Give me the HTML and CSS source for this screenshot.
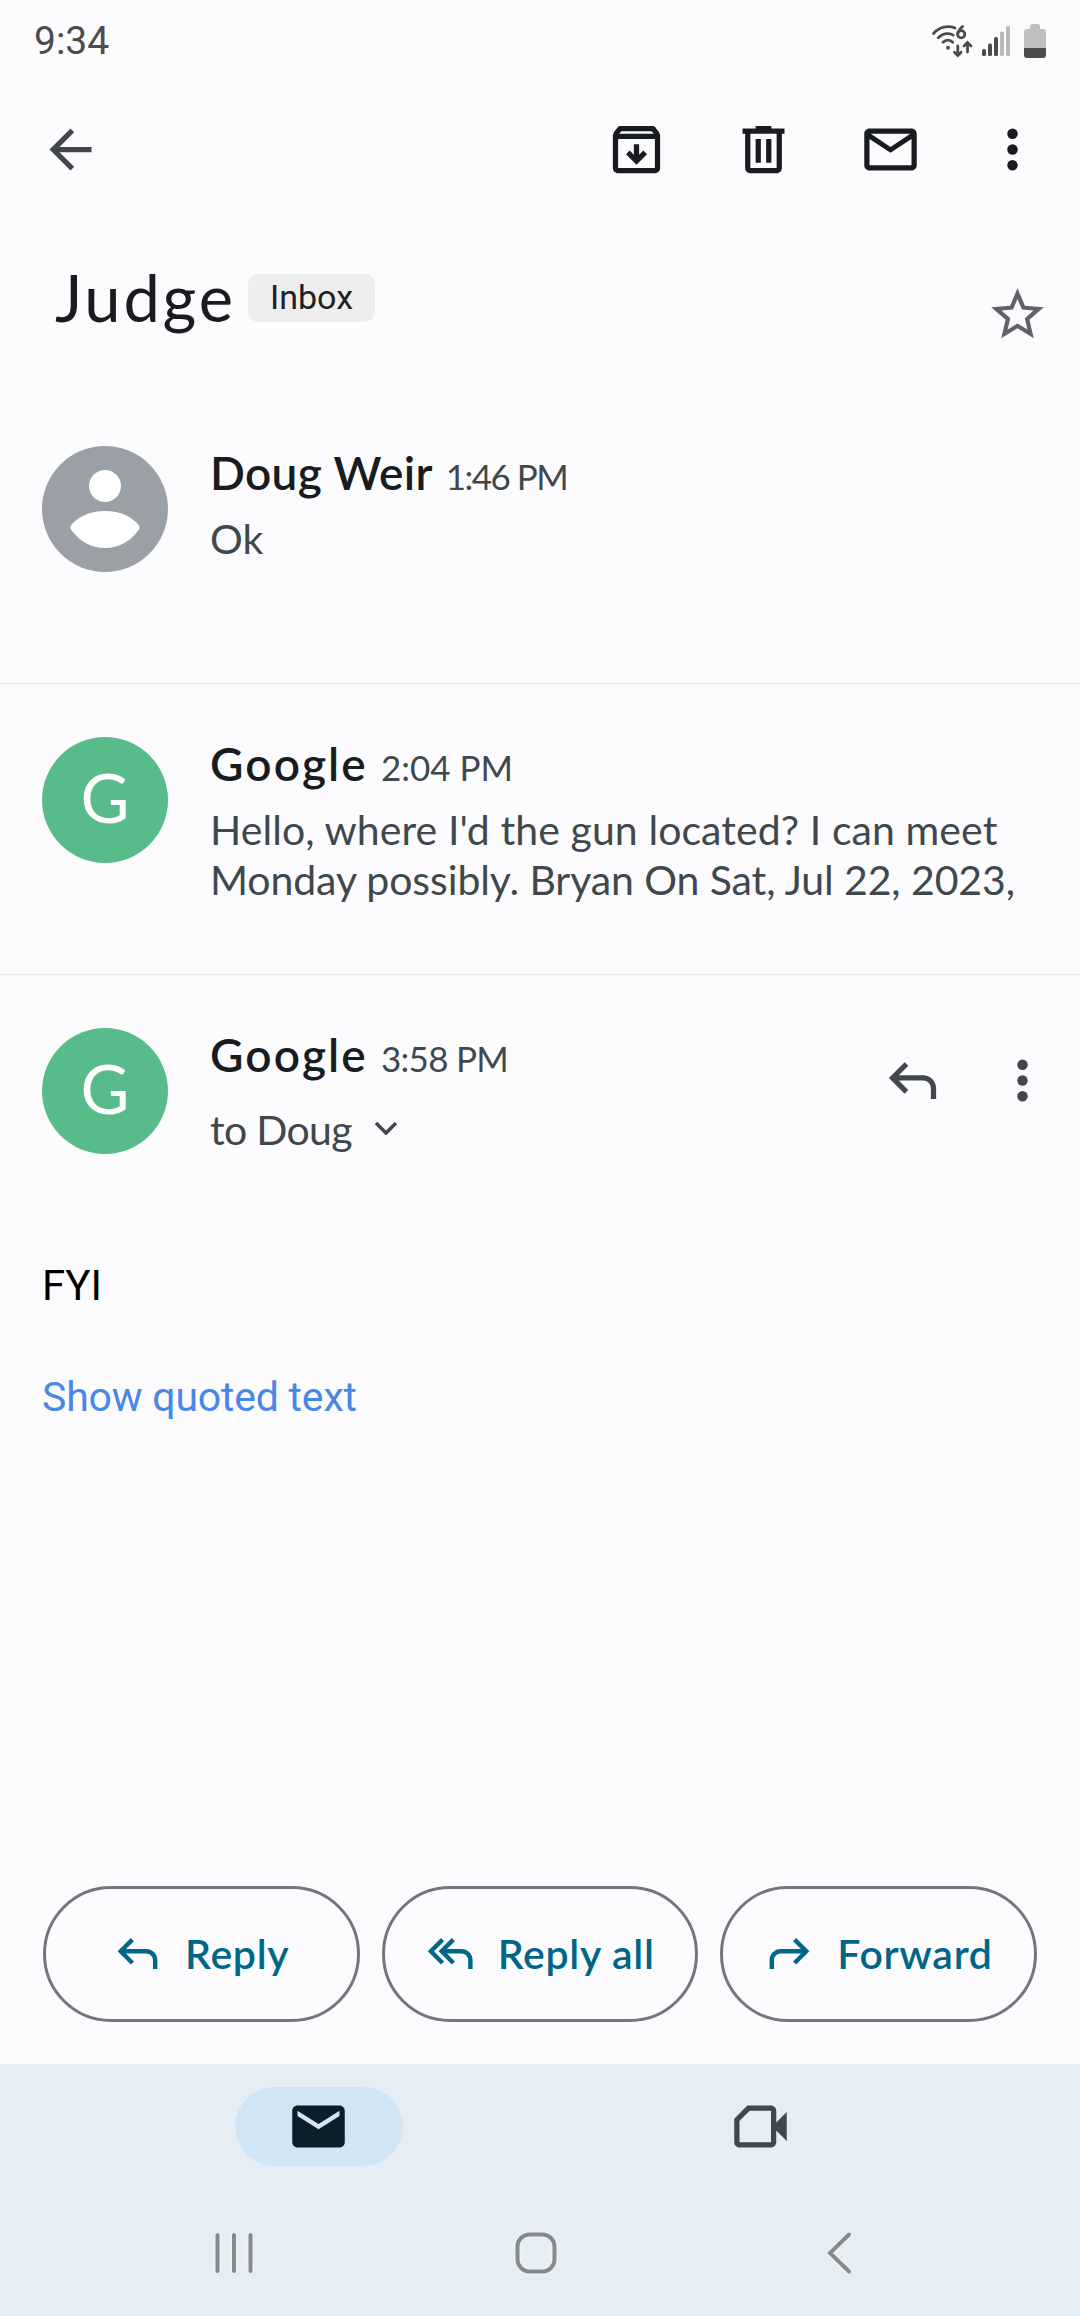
FILE: index.html
```html
<!DOCTYPE html>
<html lang="en">
<head>
    <meta charset="UTF-8">
    <meta name="viewport" content="width=device-width, initial-scale=1.0">
    <title>Judge</title>
    <link rel="stylesheet" href="styles.css">
</head>
<body>
    <svg class="sprite">
        <symbol id="more" viewBox="0 0 24 24"><circle cx="12" cy="6" r="2"/><circle cx="12" cy="12" r="2"/><circle cx="12" cy="18" r="2"/></symbol>
        <symbol id="reply" viewBox="0 0 24 24"><path d="M9 5l1.4 1.4L6.8 10H16c2.76 0 5 2.24 5 5v4h-2v-4c0-1.65-1.35-3-3-3H6.800l3.600 3.600L9 17l-6-6z"/></symbol>
    </svg>
    <div class="screen">
        <div class="status-bar">
            <span class="clock">9:34</span>
            <svg class="wifi" viewBox="0 0 42 34">
                <g fill="none" stroke="#4c4c4c" stroke-width="2.8" stroke-linecap="round">
                    <path d="M2.5 9.5C8.5 2.8 17 1.2 24 4"/>
                    <path d="M7.2 13.8c4.5-4.6 10.800-5.400 15-2.600"/>
                    <path d="M12 18.3c2.800-2.800 7-2.800 9.800 0"/>
                    <path d="M31.500 2.500c-2.500 2.400-4.800 4.800-4.800 7.700"/>
                    <circle cx="30.200" cy="10.200" r="3.600"/>
                    <path d="M26.800 22v9M23.500 28.200l3.300 3.300 3.300-3.300M36.500 28v-9M33 22l3.500-3.500L40 22"/>
                </g>
                <circle cx="17" cy="23.700" r="2" fill="#4c4c4c"/>
            </svg>
            <svg class="signal" viewBox="0 0 28 30">
                <g fill="#4c4c4c">
                    <rect x="0" y="23" width="4" height="7" rx="1.5"/>
                    <rect x="6" y="17.500" width="4" height="12.500" rx="1.5"/>
                    <rect x="12" y="11" width="4" height="19" rx="1.5"/>
                </g>
                <g fill="#b9b9ba">
                    <rect x="18" y="5.500" width="4" height="24.500" rx="1.5"/>
                    <rect x="24" y="0" width="4" height="30" rx="1.5"/>
                </g>
            </svg>
            <svg class="battery" viewBox="0 0 22 34">
                <path fill="#bfbfc0" d="M6 2.500Q6 0 8.500 0h5Q16 0 16 2.500V5h3q3 0 3 3v16H0V8q0-3 3-3h3z"/>
                <path fill="#4c4c4c" d="M0 24h22v7q0 3-3 3H3q-3 0-3-3z"/>
            </svg>
        </div>

        <div class="toolbar">
            <svg class="icon back" viewBox="0 0 24 24"><path d="M20 11H7.800l5.600-5.600L12 4l-8 8 8 8 1.400-1.400L7.800 13H20z"/></svg>
            <svg class="icon" viewBox="0 0 24 24"><path fill-rule="evenodd" d="M5.600 3h12.800l.6.3L20.600 5.400 21 6.500V19c0 1.100-.9 2-2 2H5c-1.100 0-2-.9-2-2V6.500l.4-1.100L5 3.300zM5.400 6h13.200l-.9-1H6.300zM5 8v11h14V8zm6 2h2v4l1.600-1.600L16 13.800l-4 4-4-4 1.400-1.400L11 14z"/></svg>
            <svg class="icon" viewBox="0 0 24 24"><path fill-rule="evenodd" d="M9 3h6v1h5v2h-1v13c0 1.100-.9 2-2 2H7c-1.100 0-2-.9-2-2V6H4V4h5zM7 6v13h10V6zm2 2h2v9H9zm4 0h2v9h-2z"/></svg>
            <svg class="icon" viewBox="0 0 24 24"><path fill-rule="evenodd" d="M4 4h16c1.100 0 2 .9 2 2v12c0 1.100-.9 2-2 2H4c-1.100 0-2-.9-2-2V6c0-1.100.9-2 2-2zm.5 2L12 11l7.500-5zM4 8v10h16V8l-8 5.200z"/></svg>
            <svg class="icon more"><use href="#more"/></svg>
        </div>

        <div class="subject">
            <h1>Judge</h1>
            <span class="label">Inbox</span>
            <svg class="icon star" viewBox="0 0 24 24"><path d="M22 9.240l-7.190-.62L12 2 9.190 8.630 2 9.240l5.460 4.730L5.820 21 12 17.270 18.180 21l-1.630-7.030L22 9.240zM12 15.400l-3.760 2.270 1-4.280-3.320-2.880 4.380-.38L12 6.100l1.710 4.040 4.380.38-3.320 2.880 1 4.280L12 15.400z"/></svg>
        </div>

        <div class="message">
            <svg class="avatar" viewBox="0 0 126 126">
                <circle cx="63" cy="63" r="63" fill="#9aa0a6"/>
                <circle cx="63" cy="40" r="16" fill="#fff"/>
                <path fill="#fff" d="M63 65c15 0 28 6 34 14.500q1 2 0 4C89 95 77 102 63 102S37 95 29 83.500q-1-2 0-4C35 71 48 65 63 65z"/>
            </svg>
            <div class="details">
                <div class="sender"><span class="name">Doug Weir</span><span class="time early">1:46 PM</span></div>
                <p class="snippet">Ok</p>
            </div>
        </div>

        <div class="message">
            <div class="avatar letter">G</div>
            <div class="details">
                <div class="sender"><span class="name google">Google</span><span class="time">2:04 PM</span></div>
                <p class="snippet"><span class="loose">Hello, where I'd the gun located? I can meet</span><br><span class="tight">Monday possibly. Bryan On Sat, Jul 22, 2023,</span></p>
            </div>
        </div>

        <div class="message open">
            <div class="avatar letter">G</div>
            <div class="details">
                <div class="sender"><span class="name google">Google</span><span class="time late">3:58 PM</span></div>
                <p class="recipient">to Doug <svg class="chevron" viewBox="0 0 24 14"><path d="M2 2l10 10L22 2" fill="none" stroke="#40484c" stroke-width="3.5"/></svg></p>
            </div>
            <svg class="icon"><use href="#reply"/></svg>
            <svg class="icon more"><use href="#more"/></svg>
        </div>

        <div class="body">
            <p>FYI</p>
            <a class="quoted">Show quoted text</a>
        </div>

        <div class="actions">
            <button class="action reply"><svg><use href="#reply"/></svg><span>Reply</span></button>
            <button class="action reply-all"><svg viewBox="0 0 24 24"><path d="M7.700 5l1.400 1.400L4.500 11l4.600 4.600L7.700 17l-6-6zM12.600 5L14 6.400 10.400 10H17c2.760 0 5 2.240 5 5v4h-2v-4c0-1.650-1.350-3-3-3h-6.600l3.600 3.600-1.400 1.400-6-6z"/></svg><span>Reply all</span></button>
            <button class="action forward"><svg class="flip"><use href="#reply"/></svg><span>Forward</span></button>
        </div>

        <div class="tabs">
            <div class="tab selected">
                <svg viewBox="0 0 24 24"><path d="M20 4H4c-1.100 0-2 .9-2 2v12c0 1.100.9 2 2 2h16c1.100 0 2-.9 2-2V6c0-1.100-.9-2-2-2zm0 4l-8 5-8-5V6l8 5 8-5v2z"/></svg>
            </div>
            <div class="tab">
                <svg viewBox="0 0 24 24"><path fill-rule="evenodd" d="M7 4h9c1.100 0 2 .9 2 2v4.500l4-4v11l-4-4V18c0 1.100-.9 2-2 2H4c-1.100 0-2-.9-2-2V9zM7.900 6L4 9.900V18h12V6z"/></svg>
            </div>
        </div>

        <div class="system-nav">
            <svg viewBox="0 0 44 44"><path d="M5.500 4v36M22 4v36M38.500 4v36"/></svg>
            <svg viewBox="0 0 44 44"><rect x="2.500" y="3.500" width="37" height="37" rx="12"/></svg>
            <svg viewBox="0 0 44 44"><path d="M32 3.500L13 22l19 18.500"/></svg>
        </div>
    </div>
</body>
</html>
```
FILE: styles.css
```css
* {
  box-sizing: border-box;
}
body {
  margin: 0;
  font-family: "Roboto", sans-serif;
  background-color: #fcfcff;
  color: #191c1e;
}
h1,
p {
  margin: 0;
  font-weight: 400;
}
svg {
  display: block;
  flex-shrink: 0;
}
.sprite {
  display: none;
}
.screen {
  width: 1080px;
  height: 2316px;
  display: flex;
  flex-direction: column;
  overflow: hidden;
}
.icon {
  width: 63px;
  height: 63px;
  fill: #191c1e;
}

/* status bar */
.status-bar {
  height: 82px;
  padding: 0 34px;
  display: flex;
  align-items: center;
}
.clock {
  font-size: 39px;
  color: #4c4c4c;
  margin-right: auto;
}
.wifi {
  width: 42px;
  height: 34px;
}
.signal {
  width: 28px;
  height: 30px;
  margin-left: 9px;
}
.battery {
  width: 22px;
  height: 34px;
  margin-left: 14px;
}

/* toolbar */
.toolbar {
  height: 136px;
  padding: 0 36px 1px 39px;
  display: flex;
  align-items: center;
  gap: 64px;
}
.toolbar .back {
  fill: #40484c;
  margin-right: auto;
}
.toolbar .more {
  margin-left: -5px;
}

/* subject */
.subject {
  height: 175px;
  padding: 56px 31px 0 55px;
  display: flex;
  align-items: flex-start;
}
h1 {
  font-family: "Lato", sans-serif;
  font-size: 65px;
  line-height: 46px;
  letter-spacing: 2.8px;
  width: 193px;
}
.label {
  width: 127px;
  height: 48px;
  line-height: 47px;
  border-radius: 10px;
  background-color: #eeeeee;
  color: #202124;
  font-size: 34px;
  text-align: center;
}
.star {
  margin: 9px 0 0 auto;
  fill: #5f6368;
}

/* conversation */
.message {
  height: 291px;
  padding: 53px 26px 0 42px;
  border-bottom: 1px solid #e5e7e9;
  display: flex;
}
.message.open {
  height: 240px;
  border-bottom: none;
}
.avatar {
  width: 126px;
  height: 126px;
  flex-shrink: 0;
}
.letter {
  border-radius: 50%;
  background-color: #58bb8a;
  color: #fff;
  font-family: "Lato", sans-serif;
  font-size: 67px;
  line-height: 120px;
  text-align: center;
}
.details {
  flex: 1;
  padding-left: 42px;
  white-space: nowrap;
  font-family: "Lato", sans-serif;
}
.sender {
  height: 56px;
  line-height: 53px;
}
.name {
  font-size: 46px;
  font-weight: 600;
  letter-spacing: 0.3px;
}
.google {
  letter-spacing: 2.1px;
}
.time {
  margin-left: 13px;
  font-size: 35px;
  color: #40484c;
}
.time.early {
  letter-spacing: -1.5px;
}
.time.late {
  letter-spacing: -0.7px;
}
.snippet,
.recipient {
  margin-top: 12px;
  font-size: 41px;
  line-height: 50px;
  color: #40484c;
}
.loose {
  letter-spacing: 0.08px;
}
.tight {
  letter-spacing: -0.1px;
}
.recipient {
  margin-top: 21px;
  letter-spacing: -0.7px;
  display: flex;
  align-items: center;
}
.chevron {
  width: 24px;
  height: 14px;
  margin: -4px 0 0 22px;
}
.message.open .icon {
  margin-top: 21px;
  fill: #40484c;
}
.message.open .more {
  margin-left: 47px;
}
.body {
  flex: 1;
  padding: 46px 42px 0;
  font-size: 42px;
  color: #000;
}
.body p {
  line-height: 50px;
  margin-bottom: 61px;
}
.quoted {
  color: #4a86e8;
  line-height: 50px;
  font-size: 41px;
  letter-spacing: -0.2px;
}

/* reply buttons */
.actions {
  display: grid;
  grid-template-columns: repeat(3, 1fr);
  gap: 22px;
  padding: 0 43px 42px;
}
.action {
  height: 136px;
  min-width: 0;
  padding: 0;
  border: 3px solid #70787d;
  border-radius: 68px;
  background: none;
  color: #006688;
  font-family: "Lato", sans-serif;
  font-size: 41px;
  font-weight: 600;
  letter-spacing: 0.7px;
  display: flex;
  align-items: center;
  white-space: nowrap;
}
.action svg {
  width: 53px;
  height: 53px;
  fill: #006688;
  margin-bottom: 2px;
}
.action span {
  margin-left: 21px;
  padding-bottom: 2px;
}
.reply {
  padding-left: 65px;
}
.reply-all {
  padding-left: 39px;
}
.forward {
  padding-left: 40px;
}
.flip {
  transform: scaleX(-1);
}

/* bottom bars */
.tabs {
  height: 124px;
  padding: 23px 99px 0 98px;
  display: flex;
  background-color: #e6eef5;
}
.tab {
  flex: 1;
  height: 79px;
  display: flex;
  align-items: center;
  justify-content: center;
}
.selected {
  border-radius: 40px;
  flex: 0 0 168px;
  margin: 0 137px;
  padding-right: 1px;
  background-color: #d1e5f4;
}
.tab svg {
  width: 63px;
  height: 63px;
  fill: #40484f;
}
.tab.selected svg {
  fill: #0a1e28;
}
.system-nav {
  height: 128px;
  padding: 2px 219px 0 212px;
  display: flex;
  align-items: center;
  justify-content: space-between;
  background-color: #e6eef5;
}
.system-nav svg {
  width: 44px;
  height: 44px;
  fill: none;
  stroke: #868a8b;
  stroke-width: 4;
  stroke-linecap: round;
  filter: drop-shadow(0 0 1px #fff);
}
```
